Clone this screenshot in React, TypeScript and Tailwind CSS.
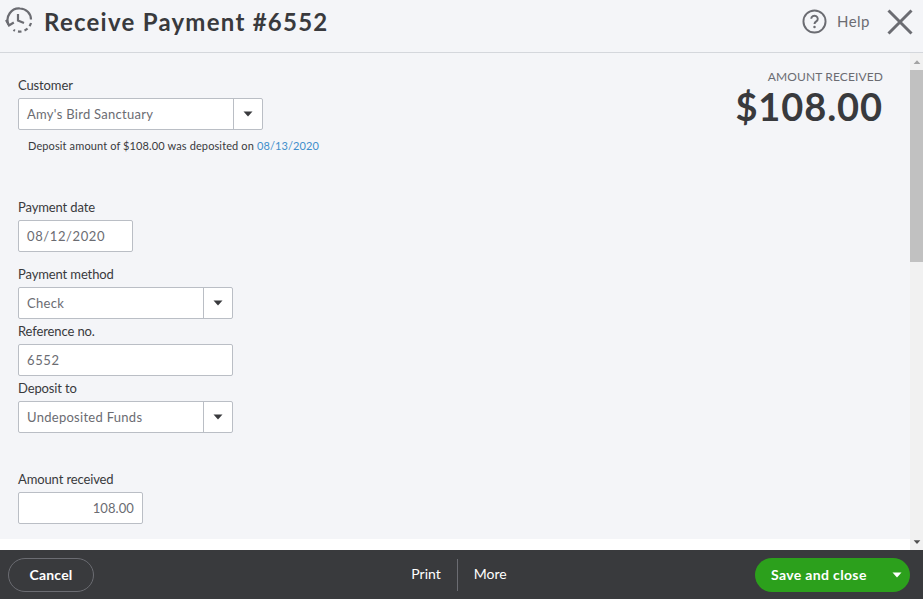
const font = { fontFamily: '"Lato", "Open Sans", sans-serif' };

function Caret({ className = "" }: { className?: string }) {
  return (
    <svg width="10" height="6" viewBox="0 0 10 6" className={className}>
      <path d="M0.5 0.5h9L5 5.5z" fill="currentColor" />
    </svg>
  );
}

function Label({ children, className = "" }: { children: React.ReactNode; className?: string }) {
  return <div className={`h-4 text-[13px] leading-4 tracking-[-0.12px] text-[#393a3d] ${className}`}>{children}</div>;
}

function Select({ value, width }: { value: string; width: string }) {
  return (
    <div className={`mt-[5px] flex h-8 rounded-[2px] border border-[#babec5] bg-white text-[13px] tracking-[0.28px] text-[#6b6c72] ${width}`}>
      <div className="flex flex-1 items-center pl-2 pt-[2px]">{value}</div>
      <div className="flex w-[29px] items-center justify-center border-l border-[#babec5] text-[#393a3d]">
        <Caret />
      </div>
    </div>
  );
}

function Input({ value, width, className = "" }: { value: string; width: string; className?: string }) {
  return (
    <div className={`mt-[5px] flex h-8 items-center rounded-[2px] border border-[#babec5] bg-white px-2 pt-[2px] text-[13px] text-[#6b6c72] ${width} ${className}`}>
      {value}
    </div>
  );
}

export default function App() {
  return (
    <div style={font} className="flex h-[599px] w-[923px] flex-col overflow-hidden bg-white">
      <header className="flex h-[53px] shrink-0 items-center border-b border-[#d4d7dc] bg-[#f4f5f8]">
        <svg width="28" height="28" viewBox="0 0 28 28" fill="none" stroke="#6b6c72" strokeWidth="2.2" className="ml-[5px] mb-[11px] mt-[-2px]">
          <path d="M3.5 18.5A11.5 11.5 0 0 1 15 2.5a11 11 0 0 1 11 11" />
          <path d="M1 14l3 5.5 4.8-3" />
          <path d="M13 8v6.5l6 2.5" />
          <path d="M26 17a11 11 0 0 1-1.5 3.2M22.5 22.5a11 11 0 0 1-3 2M16.5 25.5a11 11 0 0 1-3.5-.1M10 24.8a11 11 0 0 1-1.5-1" />
        </svg>
        <h1 className="ml-[11px] mb-[9px] text-[24px] font-bold leading-8 tracking-[1.25px] text-[#393a3d]">Receive Payment #6552</h1>
        <div className="ml-auto mb-[9px] flex items-center">
          <svg width="25" height="25" viewBox="0 0 26 26" fill="none" className="text-[#6b6c72]">
            <circle cx="13" cy="13" r="11.5" stroke="currentColor" strokeWidth="2" />
            <path d="M9.6 10.2a3.4 3.2 0 1 1 5.2 2.7c-1.2.8-1.8 1.3-1.8 2.8" stroke="currentColor" strokeWidth="2" />
            <circle cx="13" cy="18.6" r="1.3" fill="currentColor" />
          </svg>
          <span className="ml-[10px] text-[15px] tracking-[0.5px] text-[#6b6c72]">Help</span>
          <svg width="26" height="26" viewBox="0 0 26 26" className="ml-[17px] mr-[10px] text-[#6b6c72]" stroke="currentColor" strokeWidth="3">
            <path d="M1.5 1.5l23 23M24.5 1.5l-23 23" />
          </svg>
        </div>
      </header>

      <main className="flex min-h-0 flex-1">
        <div className="flex-1 bg-white">
          <div className="flex h-[486px] justify-between bg-[#f4f5f8] pl-[18px] pr-[27px] pt-[24px]">
            <div>
              <Label>Customer</Label>
              <Select value="Amy's Bird Sanctuary" width="w-[245px]" />
              <div className="ml-[10px] mt-2 h-4 text-[11px] leading-4 tracking-[0.12px] text-[#393a3d]">
                Deposit amount of $108.00 was deposited on <span className="text-[#3f8ecb]">08/13/2020</span>
              </div>
              <Label className="mt-[45px]">Payment date</Label>
              <Input value="08/12/2020" width="w-[115px]" className="tracking-[0.6px]" />
              <Label className="mt-[14px]">Payment method</Label>
              <Select value="Check" width="w-[215px]" />
              <Label className="mt-1">Reference no.</Label>
              <Input value="6552" width="w-[215px]" className="tracking-[0.6px]" />
              <Label className="mt-1">Deposit to</Label>
              <Select value="Undeposited Funds" width="w-[215px]" />
              <Label className="mt-[38px]">Amount received</Label>
              <Input value="108.00" width="w-[125px]" className="justify-end tracking-[0.1px]" />
            </div>
            <div className="-mt-2 text-right">
              <div className="h-4 text-[12px] leading-4 tracking-[0.12px] text-[#6b6c72]">AMOUNT RECEIVED</div>
              <div className="text-[38px] font-bold leading-[42px] tracking-[0.9px] text-[#393a3d]">$108.00</div>
            </div>
          </div>
        </div>
        <div className="flex w-[13px] shrink-0 flex-col items-center bg-[#f1f1f1]">
          <div className="flex h-[17px] items-center justify-center text-[#a3a3a3]">
            <Caret className="rotate-180 scale-75" />
          </div>
          <div className="h-[192px] w-full bg-[#c1c1c1]" />
          <div className="mt-auto flex h-[17px] items-center justify-center text-[#505050]">
            <Caret className="scale-75" />
          </div>
        </div>
      </main>

      <footer className="grid h-[49px] shrink-0 grid-cols-3 items-center bg-[#393a3d] pl-2 pr-[13px]">
        <button className="h-[34px] w-[86px] rounded-full border border-[#6b6c72] text-[14px] font-bold tracking-[0.2px] text-white">Cancel</button>
        <div className="flex h-8 items-center justify-center text-[14px] text-white">
          <span className="mb-[3px] px-[16px]">Print</span>
          <div className="h-8 w-px bg-[#6b6c72]" />
          <span className="mb-[3px] px-[16px]">More</span>
        </div>
        <button className="flex h-[34px] w-[155px] items-center justify-self-end rounded-full bg-[#2ca01c] pl-4 text-[14px] font-bold tracking-[0.35px] text-white">
          Save and close
          <Caret className="ml-auto mr-[8px]" />
        </button>
      </footer>
    </div>
  );
}
